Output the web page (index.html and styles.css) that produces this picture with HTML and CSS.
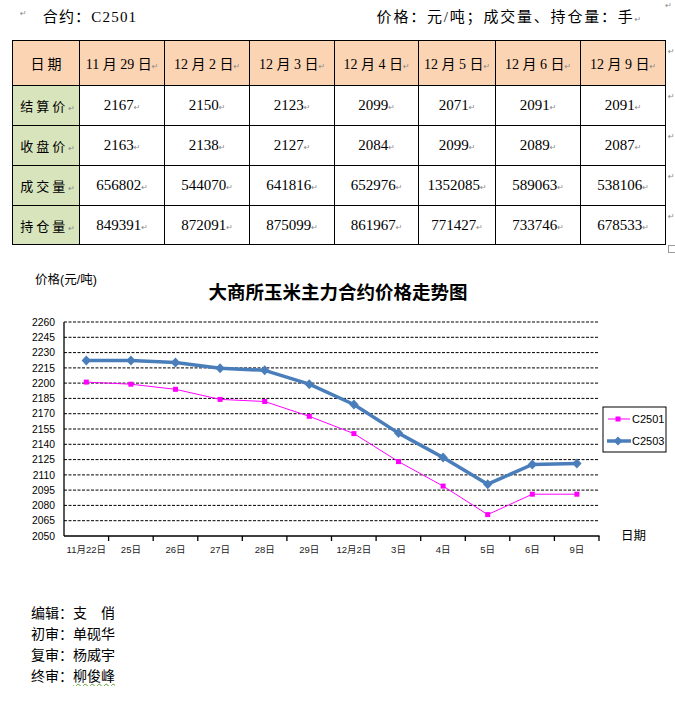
FILE: index.html
```html
<!DOCTYPE html>
<html lang="zh">
<head>
<meta charset="utf-8">
<title>大商所玉米主力合约</title>
<link rel="stylesheet" href="styles.css">
</head>
<body>
<div class="topline">
  <span class="pm first">↵</span>
  <span class="contract">合约：C2501</span>
  <span class="unit">价格：元/吨；成交量、持仓量：手<span class="pm">↵</span></span>
  <span class="pm corner">↵</span>
</div>

<div class="table-wrap">
  <table class="data">
    <colgroup>
      <col class="c0"><col class="c1"><col class="c2"><col class="c3"><col class="c4"><col class="c5"><col class="c6"><col class="c7">
    </colgroup>
    <tr class="head">
      <td class="lbl">日期</td>
      <td>11 月 29 日<span class="pm">↵</span></td>
      <td>12 月 2 日<span class="pm">↵</span></td>
      <td>12 月 3 日<span class="pm">↵</span></td>
      <td>12 月 4 日<span class="pm">↵</span></td>
      <td>12 月 5 日<span class="pm">↵</span></td>
      <td>12 月 6 日<span class="pm">↵</span></td>
      <td>12 月 9 日<span class="pm">↵</span></td>
    </tr>
    <tr class="r1">
      <td class="lbl">结算价<span class="pm">↵</span></td>
      <td>2167<span class="pm">↵</span></td><td>2150<span class="pm">↵</span></td><td>2123<span class="pm">↵</span></td><td>2099<span class="pm">↵</span></td><td>2071<span class="pm">↵</span></td><td>2091<span class="pm">↵</span></td><td>2091<span class="pm">↵</span></td>
    </tr>
    <tr class="r2">
      <td class="lbl">收盘价<span class="pm">↵</span></td>
      <td>2163<span class="pm">↵</span></td><td>2138<span class="pm">↵</span></td><td>2127<span class="pm">↵</span></td><td>2084<span class="pm">↵</span></td><td>2099<span class="pm">↵</span></td><td>2089<span class="pm">↵</span></td><td>2087<span class="pm">↵</span></td>
    </tr>
    <tr class="r3">
      <td class="lbl">成交量<span class="pm">↵</span></td>
      <td>656802<span class="pm">↵</span></td><td>544070<span class="pm">↵</span></td><td>641816<span class="pm">↵</span></td><td>652976<span class="pm">↵</span></td><td>1352085<span class="pm">↵</span></td><td>589063<span class="pm">↵</span></td><td>538106<span class="pm">↵</span></td>
    </tr>
    <tr class="r4">
      <td class="lbl">持仓量<span class="pm">↵</span></td>
      <td>849391<span class="pm">↵</span></td><td>872091<span class="pm">↵</span></td><td>875099<span class="pm">↵</span></td><td>861967<span class="pm">↵</span></td><td>771427<span class="pm">↵</span></td><td>733746<span class="pm">↵</span></td><td>678533<span class="pm">↵</span></td>
    </tr>
  </table>
  <div class="side-marks">
    <div class="sm h45"><span class="pm">↵</span></div>
    <div class="sm h40"><span class="pm">↵</span></div>
    <div class="sm h40"><span class="pm">↵</span></div>
    <div class="sm h40"><span class="pm">↵</span></div>
    <div class="sm h39"><span class="pm">↵</span></div>
    <div class="endbox"></div>
  </div>
</div>

<svg class="chart" viewBox="0 262 675 300" width="675" height="300" xmlns="http://www.w3.org/2000/svg">
  <text class="ylabel" x="35" y="284">价格(元/吨)</text>
  <text class="title" x="338" y="299" text-anchor="middle">大商所玉米主力合约价格走势图</text>

  <g class="grid">
    <line x1="64" x2="599" y1="322" y2="322"/>
    <line x1="64" x2="599" y1="337.3" y2="337.3"/>
    <line x1="64" x2="599" y1="352.6" y2="352.6"/>
    <line x1="64" x2="599" y1="367.9" y2="367.9"/>
    <line x1="64" x2="599" y1="383.1" y2="383.1"/>
    <line x1="64" x2="599" y1="398.4" y2="398.4"/>
    <line x1="64" x2="599" y1="413.7" y2="413.7"/>
    <line x1="64" x2="599" y1="429" y2="429"/>
    <line x1="64" x2="599" y1="444.3" y2="444.3"/>
    <line x1="64" x2="599" y1="459.6" y2="459.6"/>
    <line x1="64" x2="599" y1="474.9" y2="474.9"/>
    <line x1="64" x2="599" y1="490.1" y2="490.1"/>
    <line x1="64" x2="599" y1="505.4" y2="505.4"/>
    <line x1="64" x2="599" y1="520.7" y2="520.7"/>
  </g>

  <g class="axis">
    <line x1="64" x2="64" y1="322" y2="536"/>
    <line x1="64" x2="599.5" y1="536" y2="536"/>
    <line x1="108.6" x2="108.6" y1="536" y2="541"/>
    <line x1="153.2" x2="153.2" y1="536" y2="541"/>
    <line x1="197.8" x2="197.8" y1="536" y2="541"/>
    <line x1="242.3" x2="242.3" y1="536" y2="541"/>
    <line x1="286.9" x2="286.9" y1="536" y2="541"/>
    <line x1="331.5" x2="331.5" y1="536" y2="541"/>
    <line x1="376.1" x2="376.1" y1="536" y2="541"/>
    <line x1="420.7" x2="420.7" y1="536" y2="541"/>
    <line x1="465.3" x2="465.3" y1="536" y2="541"/>
    <line x1="509.8" x2="509.8" y1="536" y2="541"/>
    <line x1="554.4" x2="554.4" y1="536" y2="541"/>
    <line x1="599" x2="599" y1="536" y2="541"/>
  </g>

  <g class="yticks">
    <text x="55" y="325.7">2260</text>
    <text x="55" y="341">2245</text>
    <text x="55" y="356.3">2230</text>
    <text x="55" y="371.6">2215</text>
    <text x="55" y="386.8">2200</text>
    <text x="55" y="402.1">2185</text>
    <text x="55" y="417.4">2170</text>
    <text x="55" y="432.7">2155</text>
    <text x="55" y="448">2140</text>
    <text x="55" y="463.3">2125</text>
    <text x="55" y="478.6">2110</text>
    <text x="55" y="493.8">2095</text>
    <text x="55" y="509.1">2080</text>
    <text x="55" y="524.4">2065</text>
    <text x="55" y="539.7">2050</text>
  </g>

  <g class="xticks">
    <text x="86.3" y="552.5">11月22日</text>
    <text x="130.9" y="552.5">25日</text>
    <text x="175.5" y="552.5">26日</text>
    <text x="220.1" y="552.5">27日</text>
    <text x="264.7" y="552.5">28日</text>
    <text x="309.3" y="552.5">29日</text>
    <text x="353.9" y="552.5">12月2日</text>
    <text x="398.5" y="552.5">3日</text>
    <text x="443.1" y="552.5">4日</text>
    <text x="487.7" y="552.5">5日</text>
    <text x="532.3" y="552.5">6日</text>
    <text x="576.9" y="552.5">9日</text>
  </g>
  <text class="xname" x="621" y="540">日期</text>

  <polyline class="s1" points="86.3,382.1 130.9,384.2 175.5,389.3 220.1,399.4 264.7,401.5 309.3,416.3 353.9,433.6 398.5,461.6 443.1,486.1 487.7,514.6 532.3,494.2 576.9,494.2"/>
  <g class="s1m">
    <rect x="83.8" y="379.6" width="5" height="5"/>
    <rect x="128.4" y="381.7" width="5" height="5"/>
    <rect x="173" y="386.8" width="5" height="5"/>
    <rect x="217.6" y="396.9" width="5" height="5"/>
    <rect x="262.2" y="399" width="5" height="5"/>
    <rect x="306.8" y="413.8" width="5" height="5"/>
    <rect x="351.4" y="431.1" width="5" height="5"/>
    <rect x="396" y="459.1" width="5" height="5"/>
    <rect x="440.6" y="483.6" width="5" height="5"/>
    <rect x="485.2" y="512.1" width="5" height="5"/>
    <rect x="529.8" y="491.7" width="5" height="5"/>
    <rect x="574.4" y="491.7" width="5" height="5"/>
  </g>

  <polyline class="s2" points="86.3,360.5 130.9,360.5 175.5,362.6 220.1,368.3 264.7,370.3 309.3,384.2 353.9,404.5 398.5,433.1 443.1,457.5 487.7,484.2 532.3,464.5 576.9,463.4"/>
  <g class="s2m">
    <path d="M86.3 355.5 L91 360.5 L86.3 365.5 L81.6 360.5 Z"/>
    <path d="M130.9 355.5 L135.6 360.5 L130.9 365.5 L126.2 360.5 Z"/>
    <path d="M175.5 357.6 L180.2 362.6 L175.5 367.6 L170.8 362.6 Z"/>
    <path d="M220.1 363.3 L224.8 368.3 L220.1 373.3 L215.4 368.3 Z"/>
    <path d="M264.7 365.3 L269.4 370.3 L264.7 375.3 L260 370.3 Z"/>
    <path d="M309.3 379.2 L314 384.2 L309.3 389.2 L304.6 384.2 Z"/>
    <path d="M353.9 399.5 L358.6 404.5 L353.9 409.5 L349.2 404.5 Z"/>
    <path d="M398.5 428.1 L403.2 433.1 L398.5 438.1 L393.8 433.1 Z"/>
    <path d="M443.1 452.5 L447.8 457.5 L443.1 462.5 L438.4 457.5 Z"/>
    <path d="M487.7 479.2 L492.4 484.2 L487.7 489.2 L483 484.2 Z"/>
    <path d="M532.3 459.5 L537 464.5 L532.3 469.5 L527.6 464.5 Z"/>
    <path d="M576.9 458.4 L581.6 463.4 L576.9 468.4 L572.2 463.4 Z"/>
  </g>

  <rect class="legend" x="603" y="407" width="63" height="45"/>
  <line class="s1" x1="608" x2="630" y1="419" y2="419"/>
  <rect class="s1m" x="615.5" y="416.5" width="5" height="5"/>
  <text class="legtext" x="632" y="422.8">C2501</text>
  <line class="s2" x1="607" x2="631" y1="441" y2="441"/>
  <path class="s2m" d="M618 436.5 L622.5 441 L618 445.5 L613.5 441 Z"/>
  <text class="legtext" x="632" y="444.8">C2503</text>
</svg>

<div class="credits">
  <div>编辑：支　俏</div>
  <div>初审：单砚华</div>
  <div>复审：杨威宇</div>
  <div>终审：<span class="wavy">柳俊峰</span></div>
</div>
</body>
</html>
```

FILE: styles.css
```css
html, body {
  margin: 0;
  padding: 0;
  background: #ffffff;
}

body {
  width: 675px;
  font-family: "Liberation Serif", "Noto Sans CJK SC", serif;
  color: #000;
}

.pm {
  font-family: "DejaVu Sans", sans-serif;
  font-size: 8px;
  color: #8a8a8a;
  font-weight: normal;
  letter-spacing: 0;
}

/* top line */
.topline {
  display: flex;
  align-items: flex-start;
  height: 40px;
  box-sizing: border-box;
  padding-top: 7px;
}

.topline .first {
  margin-left: 20px;
  margin-top: 2px;
}

.contract {
  margin-left: 16px;
  font-size: 15px;
  line-height: 20px;
  letter-spacing: 1.2px;
}

.unit {
  margin-left: auto;
  font-size: 15px;
  line-height: 20px;
  letter-spacing: 1.8px;
}

.topline .corner {
  margin-left: 24px;
  margin-right: 3px;
  margin-top: -6px;
}

/* table */
.table-wrap {
  display: flex;
  align-items: flex-start;
  margin-left: 12px;
}

.data {
  border-collapse: collapse;
  table-layout: fixed;
  width: 653px;
  border: 1px solid #000;
}

.c0 { width: 67px; }
.c1 { width: 85px; }
.c2 { width: 85px; }
.c3 { width: 85px; }
.c4 { width: 84px; }
.c5 { width: 77px; }
.c6 { width: 85px; }
.c7 { width: 85px; }

.data td {
  border: 1px solid #000;
  padding: 0;
  text-align: center;
  vertical-align: middle;
  font-size: 15px;
  white-space: nowrap;
  background: #ffffff;
}

.data tr.head td {
  background: #fbd4b4;
  font-size: 14px;
  height: 44px;
}

.data tr.r1 td,
.data tr.r2 td,
.data tr.r3 td {
  height: 39px;
}

.data tr.r4 td {
  height: 38px;
}

.data td.lbl {
  background: #d7e4bc;
  font-family: "Noto Sans CJK SC", sans-serif;
  font-size: 13px;
  letter-spacing: 3px;
  padding-left: 3px;
}

.data tr.head td.lbl {
  background: #fbd4b4;
}

.side-marks {
  display: flex;
  flex-direction: column;
  margin-left: 2px;
  margin-bottom: -12px;
}

.sm {
  line-height: 10px;
  padding-top: 4px;
  box-sizing: border-box;
}

.h45 { height: 45px; }
.h40 { height: 40px; }
.h39 { height: 39px; }

.endbox {
  width: 6px;
  height: 6px;
  border: 1px solid #9a9a9a;
  margin-top: 1px;
}

/* chart */
.chart {
  display: block;
  margin-top: 17px;
}

.chart text {
  font-family: "Liberation Sans", "Noto Sans CJK SC", sans-serif;
  fill: #000;
}

.chart .ylabel {
  font-size: 12.5px;
}

.chart .title {
  font-family: "Noto Sans CJK SC", sans-serif;
  font-size: 18.5px;
  font-weight: bold;
}

.grid line {
  stroke: #000;
  stroke-width: 1;
  stroke-dasharray: 3 1.5;
}

.axis line {
  stroke: #000;
  stroke-width: 1.3;
}

.yticks text {
  font-size: 10.3px;
  text-anchor: end;
}

.xticks text {
  font-size: 9.5px;
  text-anchor: middle;
  fill: #222;
}

.chart .xname {
  font-size: 12.5px;
}

.s1 {
  fill: none;
  stroke: #ff00ff;
  stroke-width: 1;
}

.s1m {
  fill: #ff00ff;
}

.s2 {
  fill: none;
  stroke: #4a7ebb;
  stroke-width: 3.5;
  stroke-linejoin: round;
}

.s2m {
  fill: #4a7ebb;
}

.legend {
  fill: #fff;
  stroke: #000;
  stroke-width: 1;
}

.chart .legtext {
  font-size: 11px;
}

/* credits */
.credits {
  margin-top: 40px;
  padding-left: 31px;
  font-family: "Noto Sans CJK SC", sans-serif;
  font-size: 14px;
  line-height: 21px;
}

.wavy {
  text-decoration: underline wavy #5aa02c;
  text-decoration-thickness: 1px;
  text-underline-offset: 2px;
}
```
